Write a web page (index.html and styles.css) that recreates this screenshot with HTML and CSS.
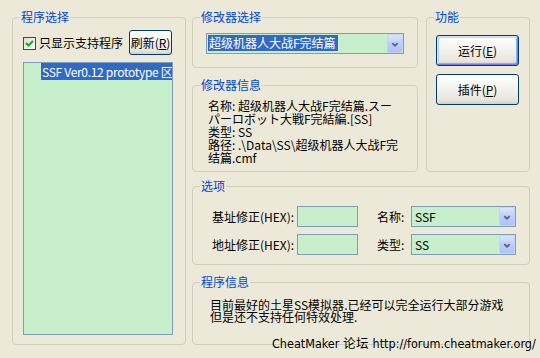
FILE: index.html
```
<!DOCTYPE html>
<html lang="zh-CN">
<head>
<meta charset="utf-8">
<title>CheatMaker</title>
<link rel="stylesheet" href="styles.css">
</head>
<body>
<div class="app">
  <section class="group g-prog">
    <span class="gtitle">程序选择</span>
    <div class="checkrow">
      <label class="chk"><span class="box"><svg width="11" height="11" viewBox="0 0 11 11"><polyline points="2,5 4.5,7.5 9,3" fill="none" stroke="#21a121" stroke-width="2"/></svg></span>只显示支持程序</label>
      <button class="btn btn-refresh">刷新(<u>R</u>)</button>
    </div>
    <div class="list">
      <div class="item sel">SSF Ver0.12 prototype 区域</div>
    </div>
  </section>

  <div class="right">
    <div class="top">
      <div class="col-a">
        <section class="group g-sel">
          <span class="gtitle">修改器选择</span>
          <div class="combo combo-main">
            <span class="val"><span class="hl">超级机器人大战F完结篇</span></span>
            <span class="drop"><svg width="16" height="19" viewBox="0 0 16 19"><polyline points="5,8 8,11 11,8" fill="none" stroke="#4d6185" stroke-width="2"/></svg></span>
          </div>
        </section>
        <section class="group g-info">
          <span class="gtitle">修改器信息</span>
          <div class="info">名称: 超级机器人大战F完结篇.スー<br>パーロボット大戦F完結編.[SS]<br>类型: SS<br>路径: .\Data\SS\超级机器人大战F完<br>结篇.cmf</div>
        </section>
      </div>
      <section class="group g-func">
        <span class="gtitle">功能</span>
        <button class="btn btn-big btn-default">运行(<u>E</u>)</button>
        <button class="btn btn-big">插件(<u>P</u>)</button>
      </section>
    </div>

    <section class="group g-opt">
      <span class="gtitle">选项</span>
      <div class="opts">
        <span class="lbl">基址修正(HEX):</span>
        <span class="input"></span>
        <span class="lbl lbl2">名称:</span>
        <div class="combo">
          <span class="val">SSF</span>
          <span class="drop"><svg width="16" height="19" viewBox="0 0 16 19"><polyline points="5,8 8,11 11,8" fill="none" stroke="#4d6185" stroke-width="2"/></svg></span>
        </div>
        <span class="lbl">地址修正(HEX):</span>
        <span class="input"></span>
        <span class="lbl lbl2">类型:</span>
        <div class="combo">
          <span class="val">SS</span>
          <span class="drop"><svg width="16" height="19" viewBox="0 0 16 19"><polyline points="5,8 8,11 11,8" fill="none" stroke="#4d6185" stroke-width="2"/></svg></span>
        </div>
      </div>
    </section>

    <section class="group g-pinfo">
      <span class="gtitle">程序信息</span>
      <div class="pinfo">目前最好的土星SS模拟器.已经可以完全运行大部分游戏<br>但是还不支持任何特效处理.</div>
    </section>
  </div>

  <div class="footer">CheatMaker 论坛 http://forum.cheatmaker.org/</div>
</div>
</body>
</html>
```
FILE: styles.css
```
* { box-sizing: border-box; }
html, body { margin: 0; padding: 0; }
body {
  background: #ece9d8;
  font: 12px/13px "Noto Sans CJK SC", "Liberation Sans", sans-serif;
  color: #000;
  overflow: hidden;
}
.app {
  position: relative;
  width: 540px;
  height: 358px;
  display: grid;
  grid-template-columns: 174px 338px;
  column-gap: 6px;
  align-items: start;
  padding: 17px 0 0 12px;
}
.group {
  position: relative;
  border: 1px solid #d0d0bf;
  border-radius: 4px;
}
.gtitle {
  position: absolute;
  top: -8px;
  left: 7px;
  padding: 0 1px;
  background: #ece9d8;
  color: #0046d5;
  line-height: 14px;
  white-space: nowrap;
}

/* program group */
.g-prog { height: 328px; padding: 12px 12px 9px 10px; }
.checkrow {
  height: 25px;
  display: flex;
  align-items: center;
  justify-content: space-between;
  padding-right: 1px;
  margin-bottom: 7px;
}
.chk { display: flex; align-items: center; white-space: nowrap; }
.box {
  width: 13px; height: 13px;
  border: 1px solid #1c5180;
  background: linear-gradient(135deg, #dcdcd7, #fff);
  margin-right: 3px;
  margin-top: 2px;
  display: flex;
}
.list {
  height: 273px;
  border: 1px solid #7f9db9;
  background: #c7efcc;
  padding-left: 17px;
  overflow: hidden;
}
.item {
  height: 17px;
  line-height: 17px;
  white-space: nowrap;
  overflow: hidden;
  padding-left: 1px;
  letter-spacing: -0.3px;
}
.item.sel { background: #316ac5; color: #fff; }

/* buttons */
.btn {
  font: inherit;
  color: #000;
  border: 1px solid #003c74;
  border-radius: 3px;
  background: linear-gradient(#ffffff, #f4f4f0 40%, #e8e6dc 85%, #d6d0c5);
  padding: 0;
  display: flex;
  align-items: center;
  justify-content: center;
  white-space: nowrap;
}
.btn u { text-decoration: underline; }
.btn-refresh { width: 43px; height: 25px; }
.btn-big { width: 83px; height: 31px; }
.btn-default {
  box-shadow: inset 1px 1px 0 #cee7ff, inset -1px -1px 0 #6982ee, inset 2px 2px 0 #bcd4f6, inset -2px -2px 0 #89adf4;
}

/* right side */
.right { display: flex; flex-direction: column; }
.top { display: flex; gap: 8px; height: 155px; }
.col-a { width: 226px; display: flex; flex-direction: column; }
.g-sel { height: 51px; padding: 15px 0 0 13px; margin-bottom: 17px; }
.g-info { height: 87px; padding: 13px 0 0 15px; }
.info { white-space: nowrap; line-height: 13px; }
.g-func {
  width: 104px;
  height: 155px;
  padding: 17px 0 0 9px;
  display: flex;
  flex-direction: column;
  gap: 8px;
}

.combo {
  height: 21px;
  border: 1px solid #7f9db9;
  background: #c7efcc;
  display: flex;
  align-items: stretch;
}
.combo-main { width: 198px; padding: 1px 0 0 1px; }
.combo .val { flex: 1; display: flex; align-items: center; padding-left: 3px; white-space: nowrap; overflow: hidden; }
.combo-main .val { padding-left: 0; align-items: flex-start; }
.hl { background: #316ac5; color: #fff; line-height: 16px; padding: 0 2px 0 1px; }
.drop {
  width: 16px;
  flex: none;
  background: linear-gradient(#dbe6fd, #bccdf9 50%, #aec3f6);
  border: 1px solid #c3d3fd;
  border-radius: 2px;
  display: flex;
}
.combo-main .drop { margin-top: -1px; }

.g-opt { height: 79px; margin-top: 14px; padding: 19px 0 0 19px; }
.opts {
  display: grid;
  grid-template-columns: 85px 61px 53px 105px;
  grid-auto-rows: 21px;
  row-gap: 7px;
  align-items: center;
}
.lbl { white-space: nowrap; }
.lbl2 { padding-left: 19px; }
.input {
  height: 21px;
  border: 1px solid #7f9db9;
  background: #c7efcc;
}
.opts .combo { height: 21px; }

.g-pinfo { height: 63px; margin-top: 17px; padding: 16px 0 0 17px; }
.pinfo { white-space: nowrap; line-height: 12px; }

.footer {
  position: absolute;
  left: 272px;
  top: 336px;
  font-family: "DejaVu Sans Condensed", "DejaVu Sans", sans-serif;
  font-stretch: condensed;
  font-size: 12.5px;
  line-height: 15px;
  white-space: nowrap;
  color: #000;
}
```
